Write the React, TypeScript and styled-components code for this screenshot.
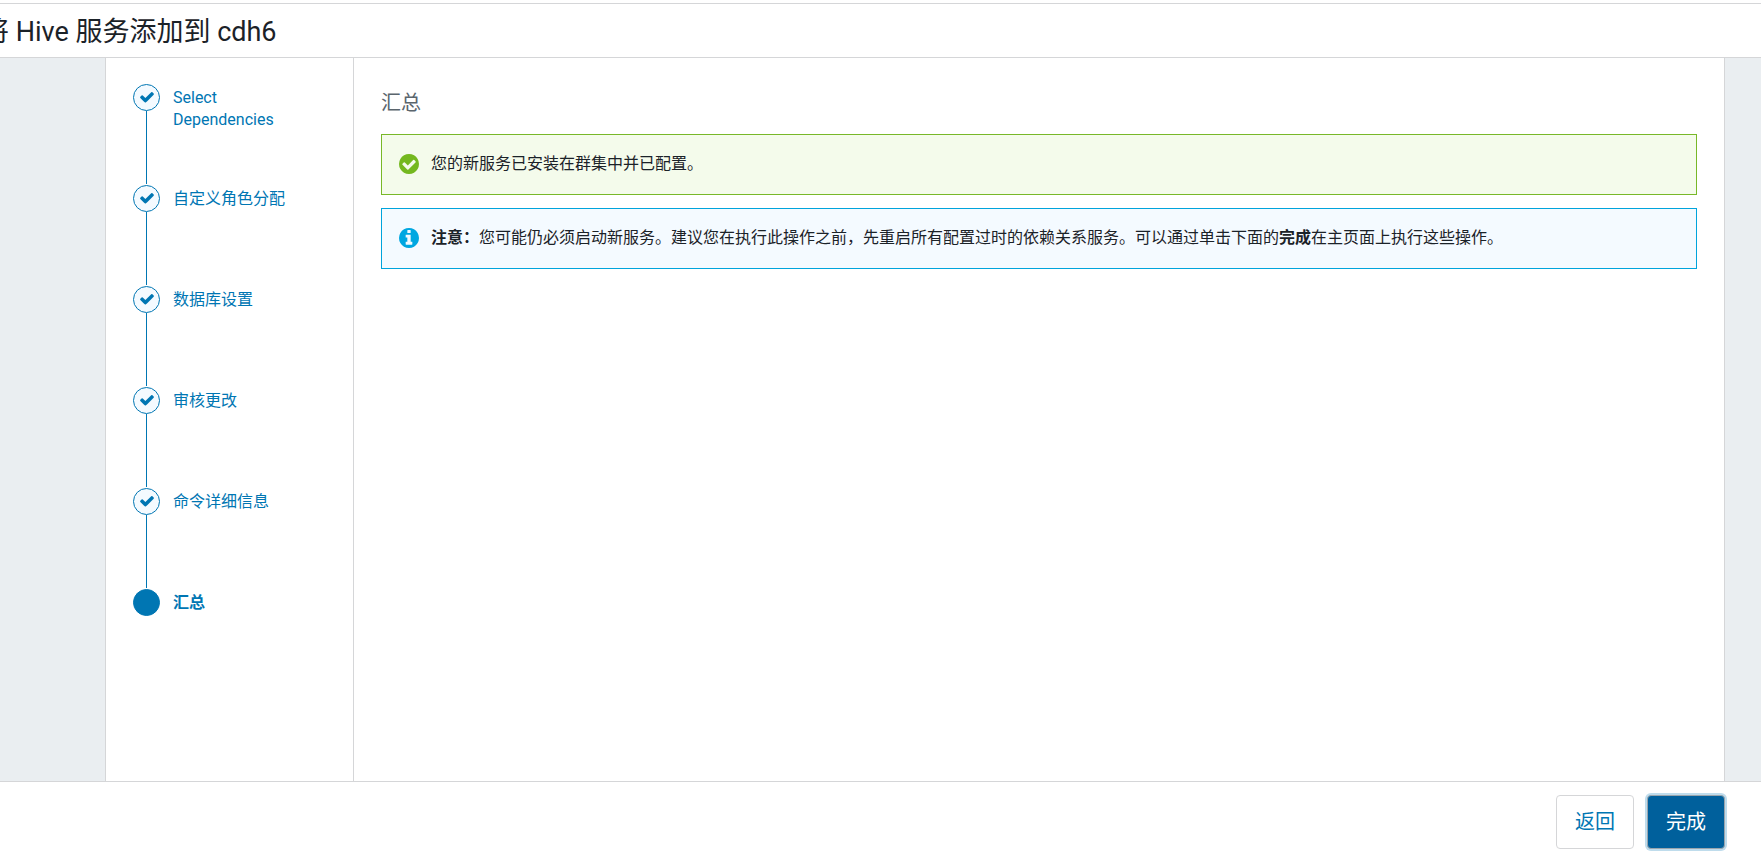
import React from "react";
import styled, { createGlobalStyle } from "styled-components";

const GlobalStyle = createGlobalStyle`
  *, *::before, *::after { box-sizing: border-box; }
  body {
    margin: 0;
    background: #fff;
    color: #1b2228;
    font-family: Roboto, "Noto Sans CJK SC", sans-serif;
    font-size: 16px;
    line-height: 22px;
  }
`;

const Page = styled.div`
  display: flex;
  flex-direction: column;
  min-height: 100vh;
  padding-top: 3px;
`;

const Header = styled.header`
  height: 55px;
  flex: none;
  overflow: hidden;
  border-top: 1px solid #d5d6d8;
  border-bottom: 1px solid #d5d6d8;
`;

const Title = styled.h1`
  margin: 0 0 0 -18px;
  padding-top: 2px;
  font-size: 27px;
  font-weight: 400;
  line-height: 53px;
  white-space: nowrap;
`;

const Body = styled.div`
  flex: 1;
  display: flex;
  padding: 0 36px 0 105px;
  background: #eaeef1;
`;

const Panel = styled.div`
  flex: 1;
  min-width: 0;
  display: flex;
  background: #fff;
  border: solid #d5d6d8;
  border-width: 0 1px;
`;

const Sidebar = styled.nav`
  width: 248px;
  flex: none;
  padding: 26px 27px;
  border-right: 1px solid #d5d6d8;
`;

const Steps = styled.ol`
  margin: 0;
  padding: 0;
  list-style: none;
`;

const Step = styled.li`
  display: flex;
  gap: 13px;
  min-height: 101px;

  &:last-child { min-height: 0; }
`;

const Track = styled.div`
  flex: none;
  display: flex;
  flex-direction: column;
  align-items: center;
  padding-bottom: 1px;
`;

const Marker = styled.span<{ $current?: boolean }>`
  width: 27px;
  height: 27px;
  display: flex;
  align-items: center;
  justify-content: center;
  padding-bottom: 1px;
  border: 1px solid #0076b3;
  border-radius: 50%;
  background: ${(p) => (p.$current ? "#0076b3" : "#f4faff")};
  color: #0076b3;
`;

const Connector = styled.span`
  flex: 1;
  width: 1px;
  background: #0076b3;
`;

const StepLink = styled.a<{ $current?: boolean }>`
  min-width: 0;
  max-width: 120px;
  padding-top: 3px;
  color: #0076b3;
  font-weight: ${(p) => (p.$current ? 700 : 400)};
  text-decoration: none;
`;

const Main = styled.main`
  flex: 1;
  min-width: 0;
  display: flex;
  flex-direction: column;
  gap: 13px;
  padding: 27px;
`;

const Heading = styled.h2`
  margin: 0;
  padding: 4px 0;
  color: #5a656d;
  font-size: 20px;
  font-weight: 400;
  line-height: 28px;
`;

const tones = {
  success: { line: "#78b828", fill: "#f4fbeb", icon: "#74b81f" },
  info: { line: "#00a4dc", fill: "#f4faff", icon: "#00a7e1" },
};

const Alert = styled.div<{ $tone: keyof typeof tones }>`
  display: flex;
  align-items: center;
  gap: 12px;
  min-height: 61px;
  padding: 16px 18px 18px 17px;
  border: 1px solid ${(p) => tones[p.$tone].line};
  background: ${(p) => tones[p.$tone].fill};

  svg {
    flex: none;
    color: ${(p) => tones[p.$tone].icon};
  }
`;

const Message = styled.p`
  margin: 0;
`;

const Footer = styled.footer`
  flex: none;
  display: flex;
  justify-content: flex-end;
  gap: 13px;
  padding: 13px 36px 8px;
  border-top: 1px solid #d5d6d8;
`;

const Button = styled.button<{ $primary?: boolean }>`
  height: 54px;
  padding: 0 18px;
  border: 1px solid ${(p) => (p.$primary ? "#9aa5ad" : "#d5d6d8")};
  border-radius: 4px;
  background: ${(p) => (p.$primary ? "#00609c" : "#fff")};
  box-shadow: ${(p) => (p.$primary ? "0 0 0 2px #bfdcec" : "none")};
  color: ${(p) => (p.$primary ? "#fff" : "#0076b3")};
  font: inherit;
  font-size: 20px;
  cursor: pointer;
`;

const CheckIcon = () => (
  <svg width="16" height="16" viewBox="0 0 1792 1792" fill="currentColor" aria-hidden="true">
    <path d="M1671 566q0 40-28 68l-724 724-136 136q-28 28-68 28t-68-28l-136-136-362-362q-28-28-28-68t28-68l136-136q28-28 68-28t68 28l294 295 656-657q28-28 68-28t68 28l136 136q28 28 28 68z" />
  </svg>
);

const CheckCircleIcon = () => (
  <svg width="20" height="20" viewBox="128 128 1536 1536" fill="currentColor" aria-hidden="true">
    <path d="M1412 734q0-28-18-46l-91-90q-19-19-45-19t-45 19l-408 407-226-226q-19-19-45-19t-45 19l-91 90q-18 18-18 46 0 27 18 45l362 362q19 19 45 19 27 0 46-19l543-543q18-18 18-45zm252 162q0 209-103 385.5t-279.5 279.5-385.5 103-385.5-103-279.5-279.5-103-385.5 103-385.5 279.5-279.5 385.5-103 385.5 103 279.5 279.5 103 385.5z" />
  </svg>
);

const InfoCircleIcon = () => (
  <svg width="20" height="20" viewBox="128 128 1536 1536" fill="currentColor" aria-hidden="true">
    <path d="M1152 1376v-160q0-14-9-23t-23-9h-96v-512q0-14-9-23t-23-9h-320q-14 0-23 9t-9 23v160q0 14 9 23t23 9h96v320h-96q-14 0-23 9t-9 23v160q0 14 9 23t23 9h448q14 0 23-9t9-23zm-128-896v-160q0-14-9-23t-23-9h-192q-14 0-23 9t-9 23v160q0 14 9 23t23 9h192q14 0 23-9t9-23zm640 416q0 209-103 385.5t-279.5 279.5-385.5 103-385.5-103-279.5-279.5-103-385.5 103-385.5 279.5-279.5 385.5-103 385.5 103 279.5 279.5 103 385.5z" />
  </svg>
);

const steps = [
  "Select Dependencies",
  "自定义角色分配",
  "数据库设置",
  "审核更改",
  "命令详细信息",
  "汇总",
];

export default function App() {
  const current = steps.length - 1;
  return (
    <Page lang="zh-CN">
      <GlobalStyle />
      <Header>
        <Title>将 Hive 服务添加到 cdh6</Title>
      </Header>
      <Body>
        <Panel>
          <Sidebar>
            <Steps>
              {steps.map((label, i) => (
                <Step key={label}>
                  <Track>
                    <Marker $current={i === current}>
                      {i < current && <CheckIcon />}
                    </Marker>
                    {i < current && <Connector />}
                  </Track>
                  <StepLink
                    href={`#step-${i + 1}`}
                    $current={i === current}
                    aria-current={i === current ? "step" : undefined}
                  >
                    {label}
                  </StepLink>
                </Step>
              ))}
            </Steps>
          </Sidebar>
          <Main>
            <Heading>汇总</Heading>
            <Alert $tone="success">
              <CheckCircleIcon />
              <Message>您的新服务已安装在群集中并已配置。</Message>
            </Alert>
            <Alert $tone="info">
              <InfoCircleIcon />
              <Message>
                <strong>注意：</strong>
                您可能仍必须启动新服务。建议您在执行此操作之前，先重启所有配置过时的依赖关系服务。可以通过单击下面的<strong>完成</strong>在主页面上执行这些操作。
              </Message>
            </Alert>
          </Main>
        </Panel>
      </Body>
      <Footer>
        <Button type="button">返回</Button>
        <Button type="button" $primary>
          完成
        </Button>
      </Footer>
    </Page>
  );
}
